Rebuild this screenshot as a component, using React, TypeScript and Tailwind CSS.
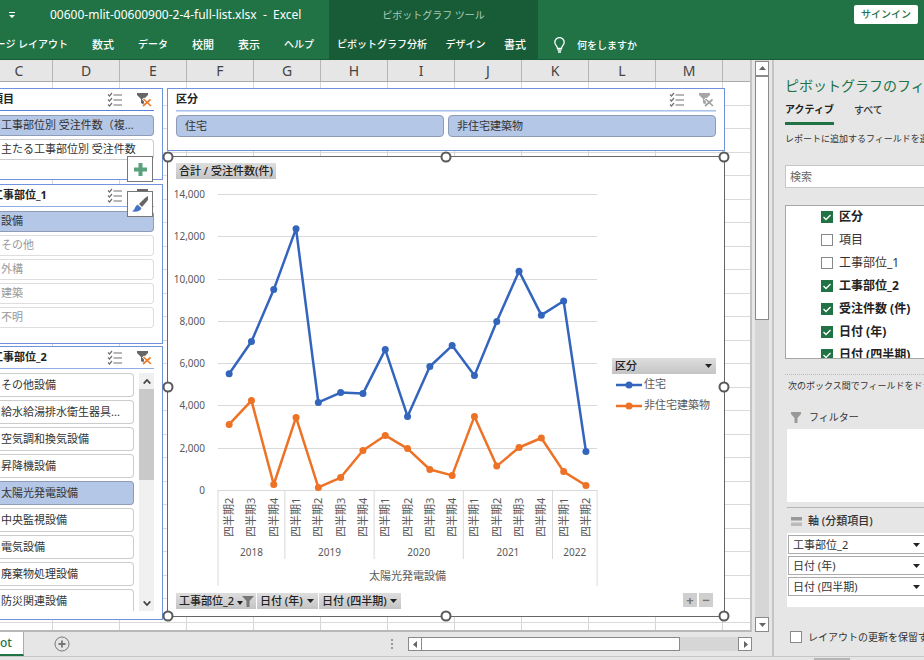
import React from "react";

const ITEM = "block w-full truncate rounded-r border border-l-0 pl-px text-left text-[11px]";

function Caret({ className = "" }: { className?: string }) {
  return (
    <svg className={className} width="7" height="4" viewBox="0 0 7 4" aria-hidden="true">
      <path d="M0 0h7L3.500 4z" fill="currentColor" />
    </svg>
  );
}

function MultiSelectIcon() {
  return (
    <svg width="16" height="15" viewBox="0 0 16 15" fill="none" stroke="#707070" strokeWidth="1.2" aria-hidden="true">
      <path d="M1 2.500l1.500 1.500L5 1M1 7.500L2.500 9 5 6M1 12.500L2.500 14 5 11" />
      <path d="M6.500 3H15M6.500 8H15M6.500 13H15" />
    </svg>
  );
}

function ClearFilterIcon({ active }: { active: boolean }) {
  return (
    <svg width="15" height="15" viewBox="0 0 15 15" aria-hidden="true">
      <path d="M0 1h11v2L7 7v6L4 11V7L0 3z" fill={active ? "#666" : "#a6a6a6"} />
      <path d="M6 6.500L14 14M13.500 7L6 14" stroke="#fff" strokeWidth="3" />
      <path d="M6.500 7L14 14M13.500 7.500L6 14" stroke={active ? "#ed7d31" : "#a0a0a0"} strokeWidth="1.700" />
    </svg>
  );
}

function SlicerHeader({ title, active = true, line, flush }: { title: string; active?: boolean; line: string; flush?: boolean }) {
  return (
    <div className={`flex h-[22px] items-center border-b ${line}`}>
      <h2 className={`flex-1 whitespace-nowrap text-[11px] font-bold text-[#222] ${flush ? "-ml-2" : ""}`}>{title}</h2>
      <button type="button" aria-label="複数選択" className="mr-3.5">
        <MultiSelectIcon />
      </button>
      <button type="button" aria-label="フィルターのクリア" className="mr-0.5">
        <ClearFilterIcon active={active} />
      </button>
    </div>
  );
}

function MenuSelect({ value, label, className, filter }: { value: string; label: string; className: string; filter?: boolean }) {
  return (
    <span className="grid items-center">
      <select
        aria-label={label}
        defaultValue={value}
        className={`col-start-1 row-start-1 appearance-none overflow-hidden whitespace-nowrap outline-none ${className}`}
      >
        <option>{value}</option>
      </select>
      {filter ? (
        <svg className="pointer-events-none col-start-1 row-start-1 mr-0.5 justify-self-end" width="17" height="11" viewBox="0 0 17 11" aria-hidden="true">
          <path d="M0 5h6L3 9z" fill="#222" />
          <path d="M5 0h12l-4.500 5v6h-3V5z" fill="#777" />
        </svg>
      ) : (
        <Caret className="pointer-events-none col-start-1 row-start-1 mr-1 justify-self-end text-[#222]" />
      )}
    </span>
  );
}

const YEARS = [
  { year: "2018", quarters: [2, 3, 4] },
  { year: "2019", quarters: [1, 2, 3, 4] },
  { year: "2020", quarters: [1, 2, 3, 4] },
  { year: "2021", quarters: [1, 2, 3, 4] },
  { year: "2022", quarters: [1, 2] },
];
const HOUSING = [5500, 7020, 9480, 12360, 4140, 4610, 4560, 6640, 3480, 5840, 6830, 5410, 7970, 10350, 8270, 8940, 1820];
const OTHER = [3100, 4230, 260, 3430, 120, 590, 1870, 2580, 1960, 970, 690, 3480, 1130, 2010, 2460, 870, 210];
const LEFT = 50;
const BASE = 308;
const STEP = 22.3;
const RIGHT = LEFT + STEP * 17;
const px = (i: number) => LEFT + STEP * (i + 0.5);
const py = (v: number) => BASE - (v / 14000) * 296;

function Series({ data, color }: { data: number[]; color: string }) {
  return (
    <g fill={color}>
      <polyline points={data.map((v, i) => `${px(i)},${py(v)}`).join(" ")} fill="none" stroke={color} strokeWidth="2.500" strokeLinejoin="round" />
      {data.map((v, i) => (
        <circle key={i} cx={px(i)} cy={py(v)} r="3.500" />
      ))}
    </g>
  );
}

function PivotPlot() {
  let n = 0;
  const groups = YEARS.map((y) => {
    const start = n;
    n += y.quarters.length;
    return { ...y, start, end: n };
  });
  return (
    <svg width="431" height="408" viewBox="0 0 431 408" className="shrink-0" role="img" aria-label="受注件数の推移">
      <g stroke="#d9d9d9">
        {[0, 2000, 4000, 6000, 8000, 10000, 12000, 14000].map((v) => (
          <line key={v} x1={LEFT} x2={RIGHT} y1={Math.round(py(v)) + 0.5} y2={Math.round(py(v)) + 0.5} />
        ))}
        {groups.slice(1).map((g) => (
          <line key={g.year} x1={LEFT + STEP * g.start} x2={LEFT + STEP * g.start} y1={BASE} y2="377" />
        ))}
        <line x1={LEFT} x2={LEFT} y1={BASE} y2="404" />
        <line x1={RIGHT} x2={RIGHT} y1={BASE} y2="404" />
      </g>
      <g fill="#595959" fontSize="10" textAnchor="end">
        {[0, 2000, 4000, 6000, 8000, 10000, 12000, 14000].map((v) => (
          <text key={v} x="37" y={py(v) + 4}>
            {v.toLocaleString("en-US")}
          </text>
        ))}
      </g>
      <g fill="#595959" fontSize="11">
        {groups.flatMap((g) =>
          g.quarters.map((q, i) => (
            <text key={`${g.year}-${q}`} transform={`translate(${px(g.start + i) + 4} 355) rotate(-90)`}>
              四半期{q}
            </text>
          )),
        )}
        {groups.map((g) => (
          <text key={g.year} x={LEFT + (STEP * (g.start + g.end)) / 2} y="374" fontSize="10" textAnchor="middle">
            {g.year}
          </text>
        ))}
        <text x={(LEFT + RIGHT) / 2} y="398" textAnchor="middle">
          太陽光発電設備
        </text>
      </g>
      <Series data={HOUSING} color="#3465bd" />
      <Series data={OTHER} color="#ed7226" />
    </svg>
  );
}

function LegendEntry({ color, name }: { color: string; name: string }) {
  return (
    <li className="flex h-[21px] items-center gap-0.5 whitespace-nowrap text-[11px] text-[#595959]">
      <svg width="26" height="8" viewBox="0 0 26 8" className="ml-1 shrink-0" aria-hidden="true">
        <path d="M0 4h26" stroke={color} strokeWidth="2.500" />
        <circle cx="13" cy="4" r="3.500" fill={color} />
      </svg>
      {name}
    </li>
  );
}

const HANDLES = [
  "left-0 top-0", "left-1/2 top-0", "left-full top-0",
  "left-0 top-1/2", "left-full top-1/2",
  "left-0 top-full", "left-1/2 top-full", "left-full top-full",
];

function PivotChart() {
  const field = "h-4 bg-linear-to-b from-[#dedede] to-[#c4c4c4] px-[3px] text-[11px] font-medium leading-4 text-[#222]";
  return (
    <section className="relative flex h-[461px] flex-col border border-[#666] bg-white pt-1.5">
      <div className="flex h-4 pl-2">
        <button type="button" className={field}>合計 / 受注件数(件)</button>
      </div>
      <div className="mt-[3px] flex min-w-0">
        <PivotPlot />
        <div className="ml-[13px] mr-2 mt-[176px] flex-1">
          <MenuSelect label="凡例フィールド" value="区分" className={`${field} w-full`} />
          <ul>
            <LegendEntry color="#3465bd" name="住宅" />
            <LegendEntry color="#ed7226" name="非住宅建築物" />
          </ul>
        </div>
      </div>
      <div className="mt-[3px] flex gap-px pl-2 pr-2.5">
        <MenuSelect label="軸フィールド 1" value="工事部位_2" className={`${field} w-20`} filter />
        <MenuSelect label="軸フィールド 2" value="日付 (年)" className={`${field} w-[61px]`} />
        <MenuSelect label="軸フィールド 3" value="日付 (四半期)" className={`${field} w-[82px]`} />
        <span className="flex-1" />
        {["+", "−"].map((s) => (
          <button key={s} type="button" className="mr-px size-3.5 bg-[#cfcfcf] text-[13px] font-bold leading-3.5 text-[#777]">
            {s}
          </button>
        ))}
      </div>
      {HANDLES.map((h) => (
        <span key={h} className={`absolute size-[11px] -translate-1/2 rounded-full border-2 border-[#595959] bg-white ${h}`} />
      ))}
    </section>
  );
}

const SELECTED = "border-[#8f9cb8] bg-[#b4c7e7] text-[#333]";
const PLAIN = "border-[#ccc] bg-white text-[#333]";
const EMPTY = "border-[#dedede] bg-white text-[#999]";
const EQUIPMENT = ["その他設備", "給水給湯排水衛生器具...", "空気調和換気設備", "昇降機設備", "太陽光発電設備", "中央監視設備", "電気設備", "廃棄物処理設備", "防災関連設備"];

function LeftSlicers() {
  const box = "border border-l-0 border-[#6f93dc] bg-white pr-2";
  return (
    <div className="relative flex w-[163px] shrink-0 flex-col">
      <section className={`${box} h-[92px]`}>
        <SlicerHeader title="項目" line="border-[#5b83d3]" flush />
        <div className="flex flex-col gap-[3px] pt-1">
          <button type="button" className={`${ITEM} h-[21px] ${SELECTED}`}>工事部位別 受注件数（複...</button>
          <button type="button" className={`${ITEM} h-[21px] ${PLAIN}`}>主たる工事部位別 受注件数</button>
        </div>
      </section>
      <section className={`${box} mt-1 h-40`}>
        <SlicerHeader title="工事部位_1" line="border-[#8faee3]" flush />
        <div className="flex flex-col gap-[3px] pt-1">
          <button type="button" className={`${ITEM} h-[21px] ${SELECTED}`}>設備</button>
          {["その他", "外構", "建築", "不明"].map((t) => (
            <button key={t} type="button" className={`${ITEM} h-[21px] ${EMPTY}`}>{t}</button>
          ))}
        </div>
      </section>
      <section className={`${box} mt-0.5 h-[274px]`}>
        <SlicerHeader title="工事部位_2" line="border-[#8faee3]" flush />
        <div className="mt-1 flex h-[238px] gap-[5px] overflow-hidden">
          <div className="flex min-w-0 flex-1 flex-col gap-[3px]">
            {EQUIPMENT.map((t) => (
              <button key={t} type="button" className={`${ITEM} h-6 shrink-0 ${t === "太陽光発電設備" ? SELECTED : PLAIN}`}>
                {t}
              </button>
            ))}
          </div>
          <div className="flex w-[15px] flex-col bg-[#f0f0f0] text-[#444]">
            <button type="button" aria-label="上へ" className="flex h-4 items-center justify-center">
              <svg width="8" height="5" viewBox="0 0 8 5" fill="none" stroke="currentColor" strokeWidth="1.800"><path d="M.7 4.500L4 1l3.300 3.500" /></svg>
            </button>
            <div className="h-[91px] bg-[#c9c9c9]" />
            <div className="flex-1" />
            <button type="button" aria-label="下へ" className="flex h-4 items-center justify-center">
              <svg width="8" height="5" viewBox="0 0 8 5" fill="none" stroke="currentColor" strokeWidth="1.800"><path d="M.7.5L4 4 7.300.5" /></svg>
            </button>
          </div>
        </div>
      </section>
      <button type="button" aria-label="グラフ要素" className="absolute right-2.5 top-[68px] flex size-[26px] items-center justify-center border border-[#777] bg-white">
        <svg width="13" height="13" viewBox="0 0 13 13"><path d="M4.500 0h4v4.500H13v4H8.500V13h-4V8.500H0v-4h4.500z" fill="#5aa27c" /></svg>
      </button>
      <button type="button" aria-label="グラフ スタイル" className="absolute right-2.5 top-[103px] flex size-[26px] items-center justify-center border border-[#777] bg-white">
        <svg width="18" height="18" viewBox="0 0 18 18">
          <path d="M17 1v4l-6 7-3-3 6-6z" fill="#666" />
          <path d="M7 9.500l3.500 3.500c-1 3.500-5 4-9.500 3.500 3-1.500 3-6 6-7z" fill="#4472c4" />
          <path d="M6.500 9l4.500 4" stroke="#fff" />
        </svg>
      </button>
    </div>
  );
}

function TopSlicer() {
  return (
    <section className="h-[63px] border border-[#6f93dc] bg-white px-2">
      <SlicerHeader title="区分" active={false} line="border-[#a5c2ea] shadow-[0_1px_#cbdcf4]" />
      <div className="flex gap-1 pt-1">
        {["住宅", "非住宅建築物"].map((t) => (
          <button key={t} type="button" className={`h-[22px] flex-1 rounded border pl-2 text-left text-[11px] ${SELECTED}`}>{t}</button>
        ))}
      </div>
    </section>
  );
}

function ScrollArrow({ label, d, className }: { label: string; d: string; className: string }) {
  return (
    <button type="button" aria-label={label} className={`flex shrink-0 items-center justify-center border border-[#8a8a8a] bg-white ${className}`}>
      <svg width="7" height="7" viewBox="0 0 7 7"><path d={d} fill="#666" /></svg>
    </button>
  );
}

function Worksheet() {
  return (
    <main className="flex min-w-0 flex-1 flex-col">
      <div className="flex min-h-0 flex-1">
        <div className="flex min-w-0 flex-1 flex-col border-b-2 border-r-2 border-b-[#b8b8b8] border-r-[#c4c4c4]">
          <div className="flex h-[22px] shrink-0 overflow-hidden border-b border-[#ababab] text-center text-[14px] leading-[22px] text-[#444]">
            <div className="w-[53px] shrink-0 border-r border-[#b5b5b5] pr-3.5">C</div>
            {["D", "E", "F", "G", "H", "I", "J", "K", "L", "M"].map((c) => (
              <div key={c} className="w-[67px] shrink-0 border-r border-[#b5b5b5]">{c}</div>
            ))}
          </div>
          <div className="flex min-h-0 flex-1 items-start gap-1 overflow-hidden bg-white bg-[linear-gradient(to_right,#d6d6d6_1px,transparent_1px),linear-gradient(to_bottom,#dadada_1px,transparent_1px_23px,#dadada_23px_24px,transparent_24px)] bg-[size:67px_47px] bg-[position:52px_23px] pt-1.5">
            <LeftSlicers />
            <div className="mr-[25px] flex min-w-0 flex-1 flex-col gap-[5px]">
              <TopSlicer />
              <PivotChart />
            </div>
          </div>
        </div>
        <div className="ml-[3px] mr-[3px] flex w-3.5 flex-col bg-[#d6d6d6] pt-px">
          <ScrollArrow label="上にスクロール" d="M3.500 1L7 5H0z" className="h-[15px]" />
          <div className="h-[244px] border border-[#8a8a8a] bg-white" />
          <div className="flex-1" />
          <ScrollArrow label="下にスクロール" d="M0 2h7L3.500 6z" className="h-[15px]" />
        </div>
      </div>
      <div className="flex h-6 shrink-0 items-center pr-5">
        <button type="button" className="h-full w-6 border-b-2 border-r border-b-[#217346] border-r-[#ababab] bg-white text-left text-[12px] font-medium text-[#217346]">
          ot
        </button>
        <button type="button" aria-label="新しいシート" className="ml-[30px]">
          <svg width="16" height="16" viewBox="0 0 16 16" fill="none" stroke="#777"><circle cx="8" cy="8" r="7" /><path d="M4.500 8h7M8 4.500v7" strokeWidth="1.800" /></svg>
        </button>
        <div className="flex-1" />
        <svg width="3" height="10" viewBox="0 0 3 10" fill="#999" className="mr-3.5"><path d="M0 0h2v2H0zM0 4h2v2H0zM0 8h2v2H0z" /></svg>
        <div className="flex h-3.5 w-[344px] bg-[#d6d6d6]">
          <ScrollArrow label="左にスクロール" d="M5 0v7L1 3.500z" className="w-3.5" />
          <div className="w-[258px] border border-l-0 border-[#8a8a8a] bg-white" />
          <div className="flex-1" />
          <ScrollArrow label="右にスクロール" d="M2 0v7l4-3.500z" className="w-3.5" />
        </div>
      </div>
    </main>
  );
}

function Tick({ checked, children, className = "" }: { checked?: boolean; children: React.ReactNode; className?: string }) {
  return (
    <label className={`flex items-center gap-1.5 whitespace-nowrap ${className}`}>
      <span className="grid shrink-0">
        <input type="checkbox" defaultChecked={checked} className="peer col-start-1 row-start-1 size-3 appearance-none border border-[#888] bg-white checked:border-[#217346] checked:bg-[#217346]" />
        <svg className="pointer-events-none invisible col-start-1 row-start-1 peer-checked:visible" width="12" height="12" viewBox="0 0 12 12" fill="none" stroke="#fff" strokeWidth="1.300">
          <path d="M2.500 6l2.500 2.500L9.500 4" />
        </svg>
      </span>
      {children}
    </label>
  );
}

const FIELDS: [string, boolean][] = [
  ["区分", true], ["項目", false], ["工事部位_1", false], ["工事部位_2", true],
  ["受注件数 (件)", true], ["日付 (年)", true], ["日付 (四半期)", true],
];

function FieldPane() {
  return (
    <aside className="flex w-[152px] shrink-0 flex-col overflow-hidden whitespace-nowrap border-l-2 border-[#c4c4c4] pl-[11px] text-[10px] text-[#333]">
      <h1 className="mt-3 h-7 text-[14px] leading-7 text-[#217346]">ピボットグラフのフィールド</h1>
      <div className="flex h-[25px] items-stretch gap-5 leading-[18px]">
        <button type="button" className="border-b-3 border-[#217346] pb-1 font-bold text-[#222]">アクティブ</button>
        <button type="button" className="pb-1.5 font-medium">すべて</button>
      </div>
      <p className="mt-1.5 h-4 text-[9px] leading-4">レポートに追加するフィールドを選択してください:</p>
      <input type="text" aria-label="検索" placeholder="検索" className="mt-[18px] h-[23px] w-60 shrink-0 border border-[#c6c6c6] bg-white px-1 text-[11px] outline-none placeholder:text-[#666]" />
      <div className="mt-[17px] h-[154px] w-60 shrink-0 overflow-hidden border border-[#a6a6a6] bg-white text-[12px]">
        {FIELDS.map(([name, on]) => (
          <Tick key={name} checked={on} className={`h-[23px] pb-0.5 pl-[35px] ${on ? "font-bold text-[#222]" : ""}`}>{name}</Tick>
        ))}
      </div>
      <div className="mt-[15px] border-t border-dotted border-[#bbb]" />
      <p className="mt-[3px] h-4 pl-[3px] text-[9px] leading-4">次のボックス間でフィールドをドラッグしてください:</p>
      <h2 className="mt-[15px] flex h-4 items-center gap-2 pl-1.5">
        <svg width="10" height="11" viewBox="0 0 10 11"><path d="M0 0h10v2L6.500 6v5h-3V6L0 2z" fill="#999" /></svg>
        フィルター
      </h2>
      <div className="ml-0.5 mt-1 h-[73px] w-60 shrink-0 bg-white" />
      <div className="ml-0.5 mt-[5px] border-t border-[#b5b5b5]" />
      <h2 className="mt-[5px] flex h-4 items-center gap-1.5 pl-1.5 text-[11px] font-medium">
        <svg width="11" height="9" viewBox="0 0 11 9"><path d="M0 0h11v3.500H0z" fill="#999" /><path d="M0 5.500h11V9H0z" fill="#bbb" /></svg>
        軸 (分類項目)
      </h2>
      <div className="ml-0.5 mt-1 flex h-[74px] shrink-0 flex-col gap-0.5 bg-white pl-px pt-0.5">
        {["工事部位_2", "日付 (年)", "日付 (四半期)"].map((f) => (
          <MenuSelect key={f} label={f} value={f} className="h-[19px] w-full border border-r-0 border-[#ababab] bg-white pl-1 text-[11px] leading-4" />
        ))}
      </div>
      <Tick className="mt-[22px] h-4 pl-[5px]">レイアウトの更新を保留する</Tick>
    </aside>
  );
}

function TitleBar() {
  const tabs = "flex h-[29px] items-center whitespace-nowrap font-medium";
  return (
    <header className="flex h-[60px] shrink-0 border-b border-[#185c37] bg-[#217346] text-white">
      <div className="flex w-[329px] shrink-0 flex-col overflow-hidden">
        <div className="flex h-8 items-center whitespace-nowrap pl-2 text-[12px]">
          <button type="button" aria-label="クイック アクセス ツール バーのユーザー設定" className="mr-[34px]">
            <svg width="8" height="7" viewBox="0 0 8 7" fill="#fff"><path d="M1 0h6v1H1zM1 3h6L4 6z" /></svg>
          </button>
          00600-mlit-00600900-2-4-full-list.xlsx&nbsp; -&nbsp; Excel
        </div>
        <nav className={`${tabs} justify-end gap-6 pr-[15px] text-[11px]`}>
          <button type="button" className="text-[10px]">ページ レイアウト</button>
          <button type="button">数式</button>
          <button type="button" className="text-[10px]">データ</button>
          <button type="button">校閲</button>
          <button type="button">表示</button>
          <button type="button" className="text-[10px]">ヘルプ</button>
        </nav>
      </div>
      <div className="flex w-[209px] shrink-0 flex-col bg-[#185c37]">
        <div className="flex h-8 items-center justify-center text-[10px] text-[#a9cdb8]">ピボットグラフ ツール</div>
        <nav className={`${tabs} justify-between pl-2 pr-3 text-[10px]`}>
          <button type="button">ピボットグラフ分析</button>
          <button type="button">デザイン</button>
          <button type="button" className="text-[11px]">書式</button>
        </nav>
      </div>
      <div className="flex min-w-0 flex-1 flex-col">
        <div className="flex h-8 items-start justify-end pr-1.5 pt-[5px]">
          <button type="button" className="h-[19px] w-16 rounded-xs bg-white text-[10px] font-medium text-[#217346]">サインイン</button>
        </div>
        <div className={`${tabs} gap-3 pl-4 text-[10px]`}>
          <svg width="11" height="16" viewBox="0 0 11 16" fill="none" stroke="#fff" strokeWidth="1.300">
            <path d="M3.500 11.500C3.500 9 .8 8.300.8 5.300a4.700 4.700 0 0 1 9.400 0c0 3-2.700 3.700-2.700 6.200zM3.500 13.200h4M4 15h3" />
          </svg>
          <button type="button">何をしますか</button>
        </div>
      </div>
    </header>
  );
}

export default function App() {
  return (
    <div lang="ja" className="flex h-screen flex-col overflow-hidden bg-[#e6e6e6] font-['Noto_Sans','Noto_Sans_CJK_JP',sans-serif]">
      <TitleBar />
      <div className="flex min-h-0 flex-1">
        <Worksheet />
        <FieldPane />
      </div>
      <footer className="flex h-1 shrink-0 items-end justify-end border-t border-[#c6c6c6] pr-[74px]">
        <div className="h-0.5 w-9 bg-[#b5b5b5]" />
      </footer>
    </div>
  );
}
